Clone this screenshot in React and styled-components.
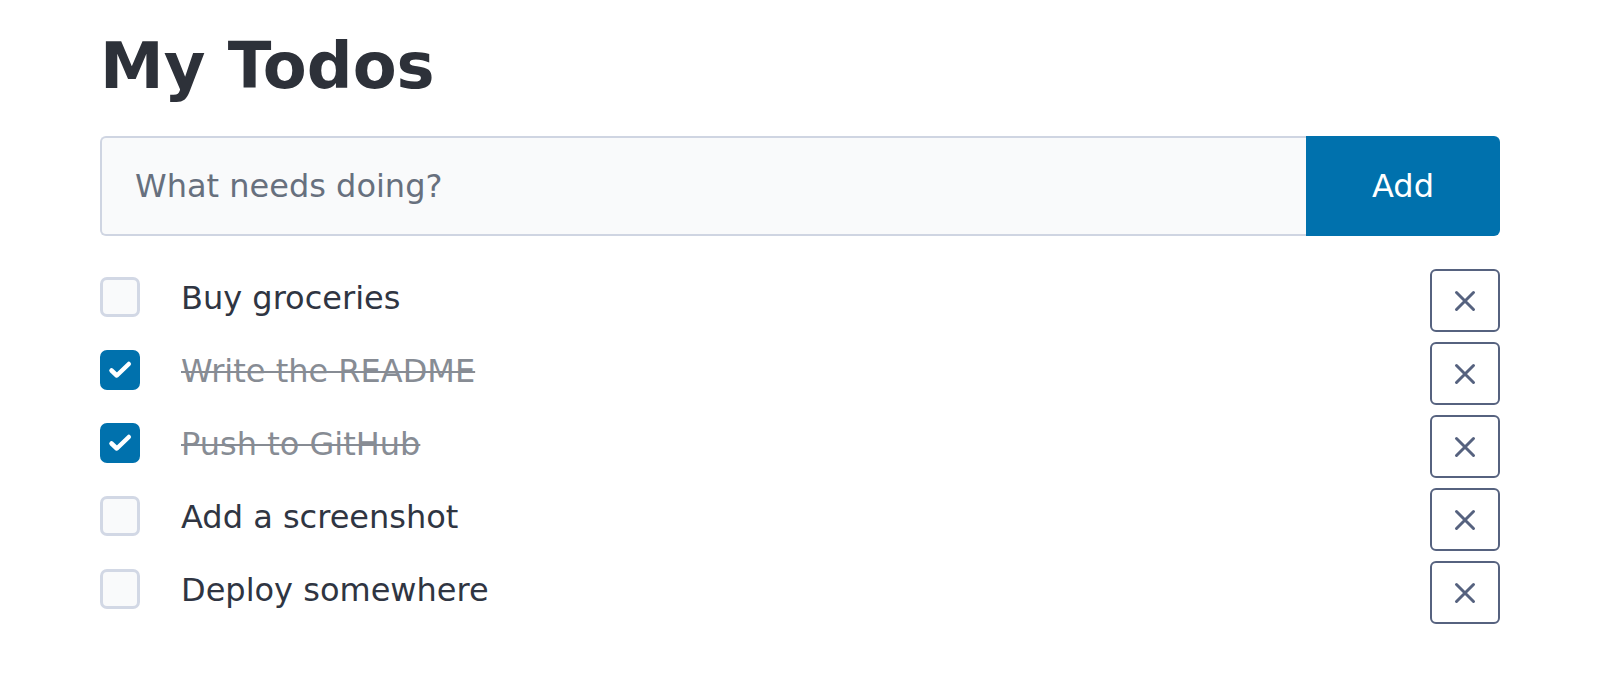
import React, {useState} from 'react';
import styled, {createGlobalStyle} from 'styled-components';

var GlobalStyle = createGlobalStyle`
  body {
    margin: 0;
    background: #ffffff;
    font-family: "DejaVu Sans", sans-serif;
  }
`;

var initialTodos = [
  {id: 1, text: 'Buy groceries', done: false},
  {id: 2, text: 'Write the README', done: true},
  {id: 3, text: 'Push to GitHub', done: true},
  {id: 4, text: 'Add a screenshot', done: false},
  {id: 5, text: 'Deploy somewhere', done: false},
];

var App = () => {
  var [todos, setTodos] = useState(initialTodos);
  var [draft, setDraft] = useState('');

  var toggle = (id) => {
    setTodos(todos.map((t) => (t.id === id ? {...t, done: !t.done} : t)));
  };

  var remove = (id) => {
    setTodos(todos.filter((t) => t.id !== id));
  };

  var add = (e) => {
    e.preventDefault();
    if (!draft.trim()) return;
    setTodos([...todos, {id: Date.now(), text: draft.trim(), done: false}]);
    setDraft('');
  };

  return (
    <Page>
      <GlobalStyle />
      <Title>My Todos</Title>
      <AddForm onSubmit={add}>
        <TodoInput
          placeholder="What needs doing?"
          value={draft}
          onChange={(e) => setDraft(e.target.value)}
        />
        <AddButton type="submit">Add</AddButton>
      </AddForm>
      <TodoList>
        {todos.map((todo) => (
          <TodoRow key={todo.id}>
            <CheckBox $checked={todo.done} onClick={() => toggle(todo.id)} aria-label="toggle">
              {todo.done && (
                <CheckIcon viewBox="0 0 28 28" fill="none">
                  <path d="M5.5 14.5l5.3 5L22.8 8" stroke="#fff" strokeWidth="4.5" strokeLinecap="round" strokeLinejoin="round" />
                </CheckIcon>
              )}
            </CheckBox>
            <TodoText $done={todo.done}>{todo.text}</TodoText>
            <DeleteButton onClick={() => remove(todo.id)} aria-label="delete">
              <CrossIcon viewBox="0 0 22 22" fill="none">
                <path d="M2.5 2.5l17 17M19.5 2.5l-17 17" stroke="#56627f" strokeWidth="3" strokeLinecap="round" />
              </CrossIcon>
            </DeleteButton>
          </TodoRow>
        ))}
      </TodoList>
    </Page>
  );
};

// styled components
var Page = styled.div`
  width: 1400px;
  margin: 0 auto;
  padding-top: 30px;
`;

var Title = styled.h1`
  margin: 0 0 34px 0;
  font-family: "DejaVu Sans", sans-serif;
  font-weight: bold;
  font-size: 64px;
  line-height: 72px;
  color: #2d3139;
`;

var AddForm = styled.form`
  display: flex;
  height: 100px;
  margin-bottom: 33px;
`;

var TodoInput = styled.input`
  flex: 1;
  min-width: 0;
  box-sizing: border-box;
  height: 100%;
  padding: 0 33px;
  border: 2px solid #cfd5e2;
  border-right: none;
  border-radius: 6px 0 0 6px;
  background: #f9fafb;
  font-family: "DejaVu Sans", sans-serif;
  font-size: 32px;
  color: #2d3340;
  outline: none;

  &::placeholder {
    color: #67707e;
  }
`;

var AddButton = styled.button`
  width: 194px;
  height: 100%;
  border: none;
  border-radius: 0 6px 6px 0;
  background: #0071ad;
  color: #ffffff;
  font-family: "DejaVu Sans", sans-serif;
  font-size: 32px;
  cursor: pointer;
`;

var TodoList = styled.ul`
  list-style: none;
  margin: 0;
  padding: 0;
  display: flex;
  flex-direction: column;
  gap: 10px;
`;

var TodoRow = styled.li`
  display: flex;
  align-items: center;
  height: 63px;
`;

var CheckBox = styled.button`
  box-sizing: border-box;
  width: 40px;
  height: 40px;
  padding: 0;
  margin: 0 41px 7px 0;
  display: flex;
  align-items: center;
  justify-content: center;
  flex-shrink: 0;
  border-radius: 7px;
  border: 3px solid ${(p) => (p.$checked ? '#0071ad' : '#d2d8e5')};
  background: ${(p) => (p.$checked ? '#0071ad' : '#f9fafb')};
  cursor: pointer;
`;

var CheckIcon = styled.svg`
  width: 28px;
  height: 28px;
  flex-shrink: 0;
`;

var TodoText = styled.span`
  flex: 1;
  margin-bottom: 6px;
  font-size: 32px;
  color: ${(p) => (p.$done ? '#878c94' : '#2f3542')};
  text-decoration: ${(p) => (p.$done ? 'line-through' : 'none')};
  text-decoration-thickness: 2px;
`;

var DeleteButton = styled.button`
  box-sizing: border-box;
  width: 70px;
  height: 63px;
  padding: 0;
  display: flex;
  align-items: center;
  justify-content: center;
  flex-shrink: 0;
  border: 2px solid #56627f;
  border-radius: 6px;
  background: #ffffff;
  cursor: pointer;
`;

var CrossIcon = styled.svg`
  width: 22px;
  height: 22px;
`;

export default App;
